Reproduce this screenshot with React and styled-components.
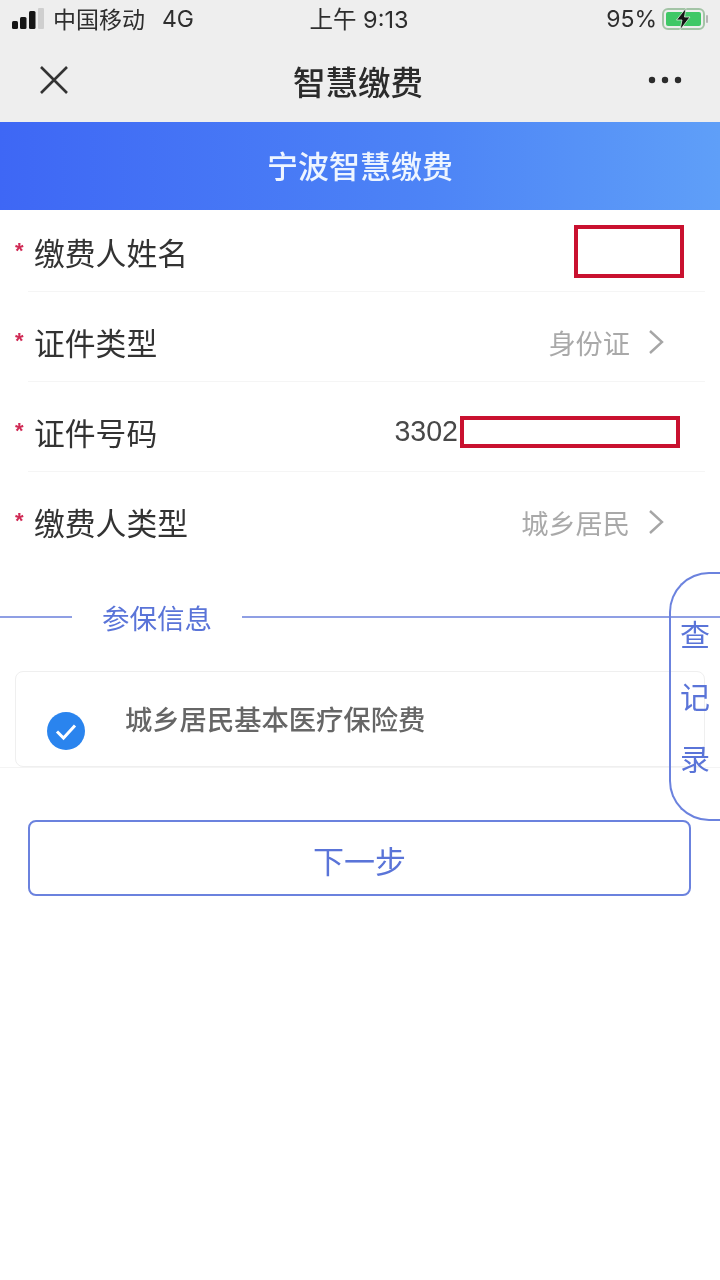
import React from "react";
import styled, { createGlobalStyle } from "styled-components";

const cjk = `"Noto Sans CJK SC", "Liberation Sans", sans-serif`;

const Global = createGlobalStyle`
  html, body { margin: 0; padding: 0; background: #fff; }
  * { box-sizing: border-box; }
  body { font-family: ${cjk}; }
`;

const Page = styled.div`
  position: relative;
  width: 720px;
  height: 1280px;
  overflow: hidden;
  background: #fff;
  filter: blur(0.6px);
`;
const Chrome = styled.header`
  background: #eeeeee;
  height: 122px;
`;
const StatusBar = styled.div`
  height: 40px;
  display: grid;
  grid-template-columns: 1fr auto 1fr;
  align-items: center;
  padding: 0 12px 2px 12px;
  color: #2e2e2e;
  font-size: 23px;
  font-family: "Inter", ${cjk};
`;
const StatusLeft = styled.div`
  display: flex;
  align-items: center;
  gap: 9px;
`;
const Carrier = styled.span`
  margin: -3px 8px 0 0;
`;
const StatusTime = styled.div`
  text-align: center;
  margin: -3px 2px 0 0;
  font-size: 23.5px;
`;
const StatusRight = styled.div`
  display: flex;
  align-items: center;
  justify-content: flex-end;
  gap: 5px;
`;
const NavBar = styled.nav`
  height: 82px;
  display: flex;
  align-items: center;
  justify-content: space-between;
  padding: 0 38px 2px 40px;
`;
const NavTitle = styled.h1`
  margin: 0;
  font-size: 32.5px;
  font-weight: 500;
  color: #2b2b2b;
`;
const Banner = styled.div`
  height: 88px;
  display: flex;
  align-items: center;
  justify-content: center;
  padding-bottom: 4px;
  background: linear-gradient(90deg, #3e67f5 0%, #4d84f6 60%, #5f9ff8 100%);
  color: #eef5ff;
  font-size: 31px;
  font-weight: 500;
`;
const Row = styled.div`
  position: relative;
  height: ${(p) => (p.$first ? 82 : 90)}px;
  padding: ${(p) => (p.$first ? 2 : 10)}px 21px 0 0;
  margin: 0 15px 0 28px;
  display: flex;
  align-items: center;
  justify-content: space-between;
  border-bottom: 1px solid ${(p) => (p.$last ? "#fff" : "#f5f5f5")};
`;
const Label = styled.span`
  position: relative;
  margin-left: 6px;
  font-size: 30.8px;
  color: #333;
  &::before {
    content: "*";
    position: absolute;
    left: -19px;
    top: 9px;
    color: #d02a55;
    font-size: 22px;
    font-family: "Liberation Sans", sans-serif;
    font-weight: 700;
  }
`;
const Value = styled.span`
  display: flex;
  align-items: center;
  font-size: 27.2px;
  color: #a9a9a9;
`;
const Chevron = styled.svg`
  width: 16px;
  height: 26px;
  margin-left: 18px;
  margin-right: 20px;
  fill: none;
  stroke: #a6a6a6;
  stroke-width: 2.4;
`;
const Mask = styled.span`
  display: block;
  border: 4px solid #c9112f;
  background: #fff;
  width: ${(p) => p.$w}px;
  height: ${(p) => p.$h}px;
  margin-right: ${(p) => p.$mr}px;
`;
const IdValue = styled.span`
  display: flex;
  align-items: center;
  gap: 2px;
  font-size: 28.6px;
  font-family: "Liberation Sans", sans-serif;
  color: #484848;
`;
const SectionHead = styled.div`
  display: flex;
  align-items: center;
  height: 30px;
  margin-top: 40px;
  color: #5a74d8;
  font-size: 27.5px;
`;
const SectionLine = styled.span`
  display: block;
  height: 2px;
  background: #8f9fe4;
  ${(p) => (p.$grow ? "flex: 1;" : "width: 72px;")}
`;
const SectionTitle = styled.span`
  margin: 0 30px;
  width: 110px;
  white-space: nowrap;
`;
const CardWrap = styled.div`
  margin-top: 39px;
  padding: 0 15px;
  border-bottom: 1px solid #f4f4f4;
`;
const Card = styled.div`
  height: 96px;
  display: flex;
  align-items: center;
  gap: 40px;
  padding-left: 31px;
  border: 1px solid #efefef;
  border-radius: 8px;
`;
const Check = styled.svg`
  width: 38px;
  height: 38px;
  margin-top: 23px;
  flex: none;
`;
const CardText = styled.span`
  font-size: 27.3px;
  font-weight: 500;
  color: #666;
  margin-bottom: 3px;
  white-space: nowrap;
`;
const NextButton = styled.button`
  display: block;
  width: 663px;
  height: 76px;
  margin: 52px 0 0 28px;
  padding: 2px 0 0;
  border: 2px solid #6b82de;
  border-radius: 8px;
  background: #fff;
  color: #5a74d8;
  font-size: 31px;
  font-family: ${cjk};
`;
const SideTab = styled.div`
  position: absolute;
  left: 669px;
  top: 572px;
  width: 51px;
  height: 249px;
  padding: 28px 0 0 9px;
  border: 2px solid #6b82de;
  border-right: none;
  border-radius: 40px 0 0 40px;
  color: #5a74d8;
  font-size: 30px;
  line-height: 62px;
`;
const SideChar = styled.div`
  height: 62px;
`;

const Signal = () => (
  <svg width="32" height="22" viewBox="0 0 32 22">
    <rect x="0" y="13" width="6" height="8" rx="1.5" fill="#161616" />
    <rect x="8" y="9" width="6.5" height="12" rx="1.5" fill="#161616" />
    <rect x="17" y="3" width="6.5" height="18" rx="1.5" fill="#161616" />
    <rect x="26" y="0" width="6" height="21" rx="1" fill="#cfcfcf" />
  </svg>
);
const Battery = () => (
  <svg width="46" height="22" viewBox="0 0 46 22">
    <rect x="1" y="1" width="41" height="20" rx="5" fill="none" stroke="#a3c4a6" strokeWidth="2" />
    <rect x="4" y="4" width="35" height="14" rx="2" fill="#3fc866" />
    <rect x="44" y="7" width="2" height="8" rx="1" fill="#b5b5b5" />
    <path d="M24 0 L14.5 12 H20 L18 22 L28 9 H22.5 Z" fill="#141414" stroke="#d9efdc" strokeWidth="0.8" />
  </svg>
);
const Close = () => (
  <svg width="28" height="28" viewBox="0 0 28 28" fill="none" stroke="#333" strokeWidth="2.6">
    <path d="M1 1 L27 27 M27 1 L1 27" />
  </svg>
);
const More = () => (
  <svg width="34" height="8" viewBox="0 0 34 8" fill="#2b2b2b">
    <circle cx="4" cy="4" r="3.2" />
    <circle cx="17" cy="4" r="3.2" />
    <circle cx="30" cy="4" r="3.2" />
  </svg>
);
const Arrow = () => (
  <Chevron viewBox="0 0 16 26">
    <path d="M2 2 L14 13 L2 24" />
  </Chevron>
);

export default function App() {
  return (
    <Page>
      <Global />
      <Chrome>
        <StatusBar>
          <StatusLeft>
            <Signal />
            <Carrier>中国移动</Carrier>
            <span>4G</span>
          </StatusLeft>
          <StatusTime>上午 9:13</StatusTime>
          <StatusRight>
            <span>95%</span>
            <Battery />
          </StatusRight>
        </StatusBar>
        <NavBar>
          <Close />
          <NavTitle>智慧缴费</NavTitle>
          <More />
        </NavBar>
      </Chrome>
      <Banner>宁波智慧缴费</Banner>
      <Row $first>
        <Label>缴费人姓名</Label>
        <Mask $w={110} $h={53} $mr={0} />
      </Row>
      <Row>
        <Label>证件类型</Label>
        <Value>身份证<Arrow /></Value>
      </Row>
      <Row>
        <Label>证件号码</Label>
        <IdValue>3302<Mask $w={220} $h={32} $mr={4} /></IdValue>
      </Row>
      <Row $last>
        <Label>缴费人类型</Label>
        <Value>城乡居民<Arrow /></Value>
      </Row>
      <SectionHead>
        <SectionLine />
        <SectionTitle>参保信息</SectionTitle>
        <SectionLine $grow />
      </SectionHead>
      <CardWrap>
        <Card>
          <Check viewBox="0 0 38 38">
            <circle cx="19" cy="19" r="19" fill="#2a84ee" />
            <path d="M10 19.5 L16.5 26 L28 13.5" fill="none" stroke="#fff" strokeWidth="3" />
          </Check>
          <CardText>城乡居民基本医疗保险费</CardText>
        </Card>
      </CardWrap>
      <NextButton type="button">下一步</NextButton>
      <SideTab>
        <SideChar>查</SideChar>
        <SideChar>记</SideChar>
        <SideChar>录</SideChar>
      </SideTab>
    </Page>
  );
}
